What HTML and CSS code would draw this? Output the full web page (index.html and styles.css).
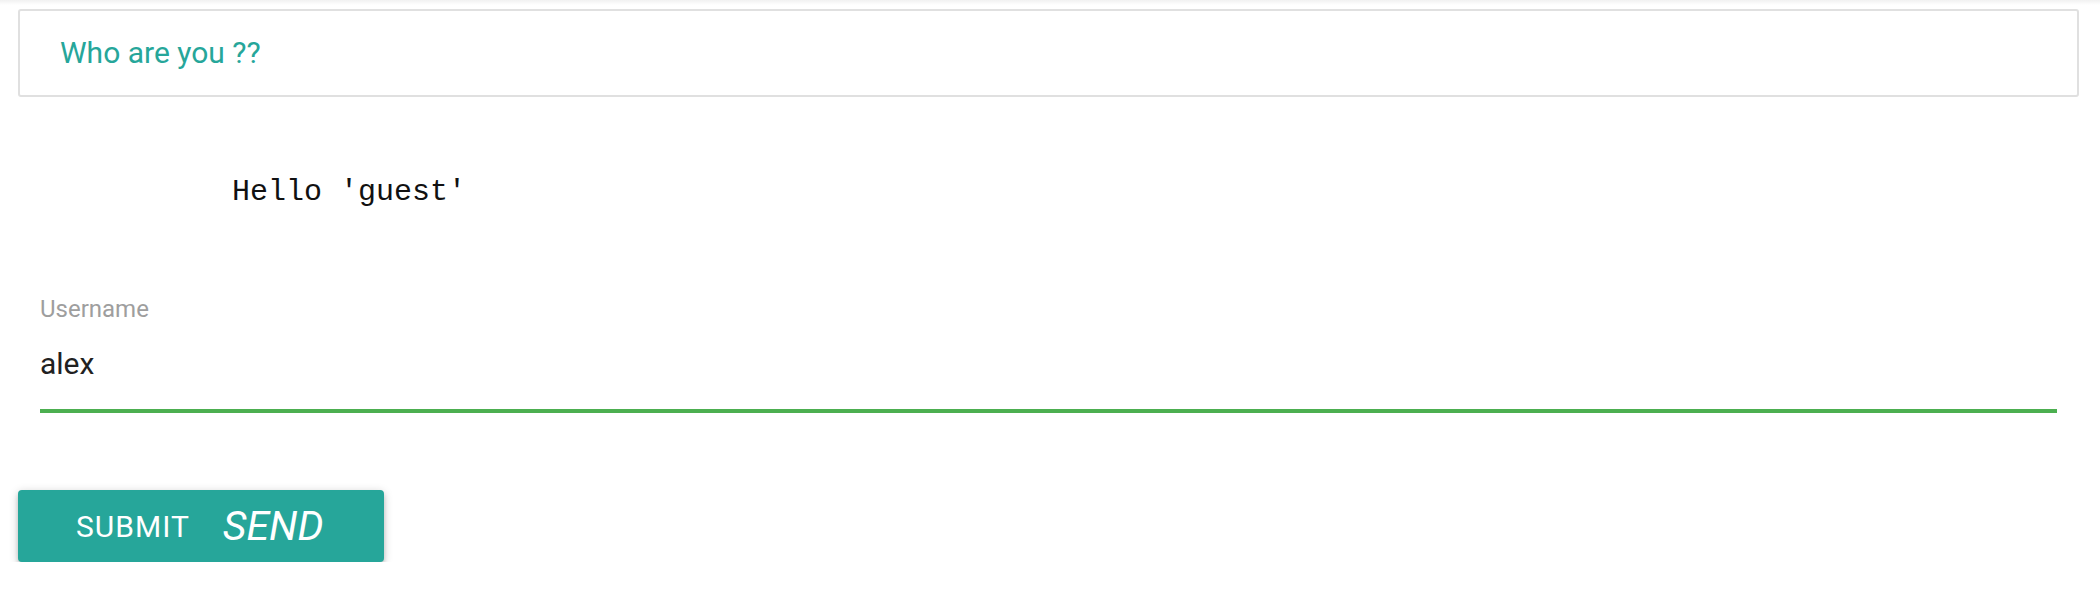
FILE: index.html
```html
<!DOCTYPE html>
<html>
<head>
<meta charset="utf-8">
<link rel="stylesheet" href="styles.css">
</head>
<body>
<div class="topshade"></div>
<div class="page">
  <div class="card"><h5 class="title">Who are you ??</h5></div>
  <pre class="greeting">Hello 'guest'</pre>
  <div class="field">
    <label class="label">Username</label>
    <div class="input">alex</div>
  </div>
  <button class="btn">Submit <i class="icon">send</i></button>
</div>
</body>
</html>
```
FILE: styles.css
```css
html, body {
  margin: 0;
  padding: 0;
  background: #fff;
  font-family: Roboto, "Liberation Sans", sans-serif;
}
.topshade {
  position: absolute;
  top: 0;
  left: 0;
  right: 0;
  height: 5px;
  background: linear-gradient(#f1f1f1, #ffffff);
}
.page {
  position: relative;
  padding: 9px 21px 0 18px;
}
.card {
  height: 88px;
  box-sizing: border-box;
  border: 2px solid #e0e0e0;
  border-radius: 3px;
  display: flex;
  align-items: center;
  padding-left: 40px;
  background: #fff;
}
.title {
  margin: 0;
  font-size: 30px;
  font-weight: 400;
  line-height: 30px;
  color: #26a69a;
}
.greeting {
  margin: 80px 0 0 214px;
  font-family: "Liberation Mono", "Courier New", monospace;
  font-size: 30px;
  line-height: 30px;
  color: #111;
}
.field {
  margin-top: 90px;
  padding: 0 22px;
}
.label {
  display: block;
  font-size: 24px;
  line-height: 24px;
  color: #9e9e9e;
}
.input {
  margin-top: 28px;
  font-size: 30px;
  line-height: 30px;
  color: #212121;
  padding-bottom: 30px;
  border-bottom: 4px solid #4caf50;
}
.btn {
  margin-top: 77px;
  height: 72px;
  padding: 0 60px 0 58px;
  border: none;
  border-radius: 4px;
  background: #26a69a;
  color: #fff;
  font-family: Roboto, "Liberation Sans", sans-serif;
  font-size: 30px;
  letter-spacing: 1px;
  text-transform: uppercase;
  display: inline-flex;
  align-items: center;
  box-shadow: 0 4px 4px 0 rgba(0,0,0,0.14), 0 6px 2px -4px rgba(0,0,0,0.12), 0 2px 10px 0 rgba(0,0,0,0.2);
}
.icon {
  font-size: 41px;
  letter-spacing: 0;
  margin-left: 33px;
}
```
